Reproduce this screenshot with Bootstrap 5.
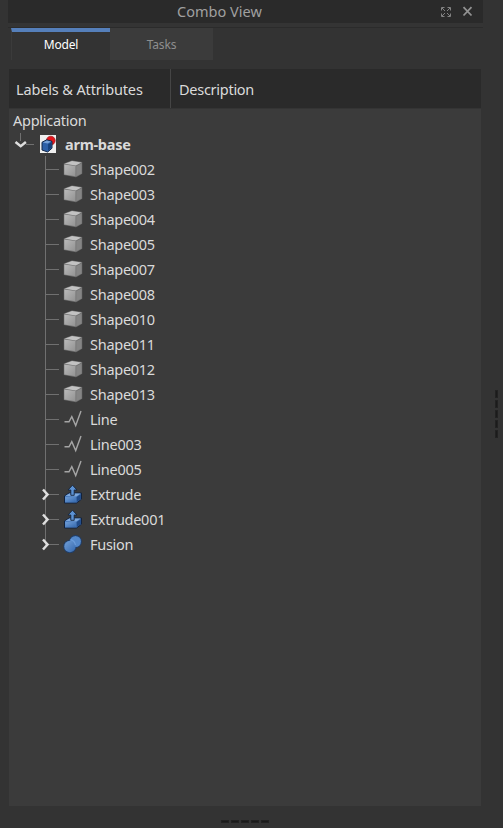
<!DOCTYPE html>
<html lang="en"><head><meta charset="utf-8"><title>Combo View</title>
<link href="https://cdn.jsdelivr.net/npm/bootstrap@5.3.0/dist/css/bootstrap.min.css" rel="stylesheet">
<style>
body{background:#333;color:#dadada;font:14.5px/25px "Noto Sans","Open Sans",sans-serif;letter-spacing:-.27px;height:828px;overflow:hidden}
.dock{width:475px;margin-left:8px;height:828px}
.dock-title{height:23px;background:#2a2a2a;color:#a0a0a0;letter-spacing:.02px}
.dock-title .caption{width:423px;line-height:23px}
.dock-title .tools{width:52px;padding-left:10px;gap:11px}
.rule{height:5px;border-bottom:1px solid #2b2b2b;background:#343434}
.tabs{height:32px;font-size:12px;padding-left:3px;letter-spacing:-.15px}
.tab-on{width:99px;border-top:4px solid #557fba;border-left:1px solid #3b3b3b;color:#fff;line-height:25px}
.tab-off{width:103px;background:#3b3b3b;color:#8e8e8e;line-height:33px}
.panel{margin:9px 2px 0 1px;height:737px;background:#3b3b3b}
.heads{height:40px;background:#2a2a2a;border-bottom:1px solid #343434;line-height:41px}
.heads .first{width:162px;border-right:1px solid #454545;padding-left:7px;letter-spacing:-.14px}
.heads .second{padding-left:8px}
.tree-row{height:25px;white-space:nowrap}
.tree-top{margin-top:-1px;padding-left:4px}
.child svg.arm{width:54px;height:25px;flex:none;overflow:visible}
.pic{width:20px;height:20px;flex:none;margin-bottom:4px}
.tree-label{margin:0 0 4px 7px;line-height:24px}
.grip{position:absolute;display:flex;gap:2px}
.grip i{background:#1b1b1b;border:1px solid #222}
.grip.side{left:495px;top:390px;flex-direction:column}.grip.side i{width:3px;height:8px}
.grip.foot{left:221px;top:820px}.grip.foot i{height:3px;width:8px}
</style>
<script src="https://cdn.jsdelivr.net/npm/bootstrap@5.3.0/dist/js/bootstrap.bundle.min.js"></script>
</head><body>
<svg width="0" height="0" class="position-absolute">
<defs>
<linearGradient id="g" x2="1" y2="1"><stop stop-color="#bababa"/><stop offset="1" stop-color="#929292"/></linearGradient>
<linearGradient id="b" x2="1" y2="1"><stop stop-color="#72a0d8"/><stop offset="1" stop-color="#3468ae"/></linearGradient>
</defs>
<symbol id="cube" viewBox="0 0 20 20"><path d="M.8 4.5 9 1.5 19.2 3v11.7L13 18.2.8 16Z" fill="#707070"/><path d="M1.6 4.8 9 2l9.4 1.5-5.6 2.9Z" fill="#c2c2c2"/><path d="M1.3 5.5l11.2 1.6v10.2L1.3 15.4Z" fill="url(#g)"/><path d="M13.2 7.2l5.3-2.8v10l-5.3 2.9Z" fill="#858585"/></symbol>
<symbol id="wire" viewBox="0 0 20 20"><path d="M1.5 12.8H6L8.8 7.7 12.7 16.6 18 2" fill="none" stroke="#a5a5a5" stroke-width="1.4"/></symbol>
<symbol id="extrude" viewBox="0 0 20 20"><path d="M1.5 12 6 9h12.5v6.2L13.5 19h-12Z" fill="#4779bb" stroke="#13223c"/><path d="M2.3 12 6.3 9.6h11.2l-4.2 3Z" fill="#7ca7dc"/><path d="M2.2 13.1h10.5v5.2H2.2Z" fill="url(#b)"/><path d="M13.6 12.9l4.3-3v5l-4.3 3.4Z" fill="#214b88"/><path d="M9.5 1.2 14 6h-2.8v5.3H7.8V6H5Z" fill="#5c92d4" stroke="#15263f" stroke-width=".9"/></symbol>
<symbol id="fusion" viewBox="0 0 20 20"><g stroke="#203f6c" stroke-width="1.4"><circle cx="12.5" cy="7.5" r="5.7"/><circle cx="6.9" cy="12.5" r="5.9"/></g><circle cx="12.5" cy="7.5" r="5.5" fill="#5387c9"/><circle cx="6.9" cy="12.5" r="5.7" fill="url(#b)"/><path d="M7.5 5.7q4.3 1 4.9 5.4" fill="none" stroke="#6b9cda" stroke-width="1.2"/></symbol>
</svg>
<main class="dock">
<div class="dock-title d-flex"><div class="caption text-center">Combo View</div><div class="tools d-flex align-items-center">
<svg width="10" height="10" viewBox="0 0 10 10" fill="none" stroke="#828282"><path d="M.5 3.5v-3h3M6.5.5h3v3M9.5 6.5v3h-3M3.5 9.5h-3v-3M1 1l3 3M9 1 6 4M9 9 6 6M1 9l3-3"/></svg>
<svg width="11" height="11" viewBox="0 0 11 11"><path d="M1.5 1.2l8 8.3M9.5 1.2l-8 8.3" stroke="#929292" stroke-width="1.8"/></svg></div></div>
<div class="rule"></div>
<div class="tabs d-flex text-center"><div class="tab-on">Model</div><div class="tab-off">Tasks</div></div>
<section class="panel"><div class="heads d-flex"><div class="first">Labels &amp; Attributes</div><div class="second">Description</div></div>
<div id="tree"><div class="tree-row tree-top">Application</div>
<div class="tree-row d-flex align-items-center fw-bold"><svg width="29" height="25" class="flex-shrink-0"><path d="M11.5-2v10M17 11.5h8" stroke="#707070"/><path d="M6.5 9l5.2 4.2L16.9 9" fill="none" stroke="#dedede" stroke-width="2.5"/></svg>
<svg class="pic" viewBox="0 0 20 20"><path d="M2 1h16v18H2Z" fill="#f0f0f0"/><circle cx="12.8" cy="6.6" r="4.4" fill="#e5161c" stroke="#971f22" stroke-width=".7"/><path d="M4 8.3 8.7 5.8l5.3 1.5v6.9L9.7 18 4 16Z" fill="#2d60a8" stroke="#132746"/><path d="M4.8 8.4 8.9 6.4l4.2 1.2-3.5 2Z" fill="#77a1d7"/><path d="M10.1 10.2 13.3 8.3v5.5l-3.2 3Z" fill="#17417b"/></svg><span class="tree-label">arm-base</span></div></div>
</section></main>
<div class="grip side"><i></i><i></i><i></i><i></i><i></i></div><div class="grip foot"><i></i><i></i><i></i><i></i><i></i></div>
<script>
const items=[..."002 003 004 005 007 008 010 011 012 013".split(" ").map(n=>["Shape"+n,"cube"]),["Line","wire"],["Line003","wire"],["Line005","wire"],["Extrude","extrude",1],["Extrude001","extrude",1],["Fusion","fusion",1]];
document.getElementById("tree").insertAdjacentHTML("beforeend",items.map(([t,i,c],k)=>`<div class="tree-row child d-flex align-items-center"><svg class="arm"><path d="M36.5 ${k?0:-2}V${k==15?12:25}M37 11.5H50" stroke="#707070"/>${c?'<path d="M34 6.5l4.5 5L34 16.5" fill="none" stroke="#dedede" stroke-width="2.5"/>':''}</svg><svg class="pic"><use href="#${i}"/></svg><span class="tree-label">${t}</span></div>`).join(""));
</script></body></html>
